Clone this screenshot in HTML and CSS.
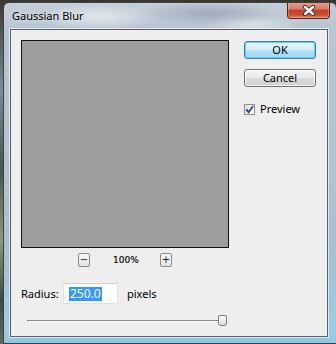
FILE: index.html
```html
<!DOCTYPE html>
<html>
<head>
<meta name="viewport" content="width=device-width, initial-scale=1.0">
<link rel="stylesheet" href="styles.css">
</head>
<body>

<div class="window">
  <div class="titlebar">
    <span class="title">Gaussian Blur</span>
    <span class="close">
      <svg width="14" height="11" viewBox="0 0 14 11">
        <path d="M3 2 L11 9 M11 2 L3 9" stroke="#3a2a2a" stroke-width="4.2" stroke-linecap="round"/>
        <path d="M3 2 L11 9 M11 2 L3 9" stroke="#ffffff" stroke-width="2.4" stroke-linecap="round"/>
      </svg>
    </span>
  </div>

  <div class="panel">
    <div class="top">
      <div class="left">
        <div class="preview"></div>
        <div class="zoom">
          <span class="zbtn">&minus;</span>
          <span class="pct">100%</span>
          <span class="zbtn">+</span>
        </div>
      </div>
      <div class="right">
        <div class="btn default">OK</div>
        <div class="btn">Cancel</div>
        <div class="check">
          <span class="box">
            <svg width="9" height="9" viewBox="0 0 9 9">
              <path d="M1.3 4.3 L3.6 7.2 L8 1.2" fill="none" stroke="#2f4a8f" stroke-width="1.9"/>
            </svg>
          </span>
          Preview
        </div>
      </div>
    </div>

    <div class="radius">
      <span class="label">Radius:</span>
      <div class="field"><span class="sel">250.0</span></div>
      <span class="unit">pixels</span>
    </div>

    <div class="slider">
      <div class="track"></div>
      <div class="thumb"></div>
    </div>
  </div>
</div>

</body>
</html>
```

FILE: styles.css
```css
* {box-sizing: border-box;}

body {
  margin: 0;
  width: 336px;
  height: 344px;
  overflow: hidden;
  background: linear-gradient(180deg, #3a362e 0, #4b4a44 20px, #7a8c98 90px, #44564c 170px, #8a9a78 240px, #3c4a40 300px, #606a5a 344px);
  font-family: "Noto Sans", sans-serif;
  font-size: 11px;
  color: #000;
}

.window {
  margin: 2px 0 0 3px;
  width: 334px;
  height: 342px;
  border: 1px solid #3b4148;
  border-radius: 6px 6px 0 0;
  overflow: hidden;
  background:
    radial-gradient(ellipse 60px 14px at 95px 14px, rgba(255,255,255,.55), transparent),
    radial-gradient(ellipse 70px 12px at 205px 10px, rgba(120,135,150,.45), transparent),
    radial-gradient(ellipse 50px 10px at 250px 22px, rgba(255,255,255,.45), transparent),
    linear-gradient(180deg, #c4ced8 0, #b8c5d1 26px, #b4c4cf 120px, #a9c0cc 250px, #9ccbe0 330px, #8cc6e4 342px);
}

.titlebar {
  height: 26px;
  display: flex;
  justify-content: space-between;
  align-items: flex-start;
  padding: 0 6px 0 8px;
}

.title {
  margin-top: 5px;
  font-size: 11px;
  line-height: 16px;
  text-shadow: 0 0 6px rgba(255,255,255,.9);
}

.close {
  margin-top: -1px;
  width: 43px;
  height: 17px;
  border: 1px solid #5a231a;
  border-top: none;
  border-radius: 0 0 4px 4px;
  background: linear-gradient(180deg, #e7a08f 0, #d77863 45%, #c2402a 52%, #c84a30 80%, #e58a68 100%);
  box-shadow: inset 0 0 0 1px rgba(255,200,190,.35);
  display: flex;
  align-items: center;
  justify-content: center;
}

.panel {
  margin-left: 6px;
  width: 318px;
  height: 308px;
  border: 1px solid #56636f;
  box-shadow: 0 0 0 1px rgba(255,255,255,.6);
  background: #eeeeee;
  padding: 10px 10px 0 10px;
}

.top {
  display: flex;
  gap: 15px;
}

.preview {
  width: 208px;
  height: 208px;
  border: 1px solid #111;
  background: #9d9d9d;
}

.zoom {
  margin-top: 4px;
  height: 15px;
  display: flex;
  justify-content: center;
  align-items: center;
  gap: 23px;
}

.zbtn {
  width: 12px;
  height: 14px;
  border: 1px solid #8a8a8a;
  border-radius: 2px;
  background: linear-gradient(180deg, #fafafa, #e2e2e2);
  font-family: "DejaVu Sans", sans-serif;
  font-size: 10px;
  line-height: 12px;
  text-align: center;
  color: #222;
}

.pct {
  font-family: "DejaVu Sans", sans-serif;
  font-size: 9px;
  color: #111;
  width: 24px;
  text-align: center;
  -webkit-text-stroke: 0.2px #111;
}

.right {
  padding-top: 1px;
  display: flex;
  flex-direction: column;
  gap: 10px;
}

.btn {
  width: 72px;
  height: 18px;
  border: 1px solid #707070;
  border-radius: 3px;
  background: linear-gradient(180deg, #f2f2f2 0, #ebebeb 50%, #dddddd 50%, #cfcfcf 100%);
  box-shadow: inset 0 0 0 1px rgba(255,255,255,.8);
  text-align: center;
  font-size: 11px;
  line-height: 16px;
}

.btn.default {
  border-color: #3c7fb1;
  background: linear-gradient(180deg, #e5f5fc 0, #d3eefb 50%, #b5e2f8 50%, #a2d6f2 100%);
  box-shadow: inset 0 0 0 1px #5fd2f3;
}

.check {
  margin-top: 6px;
  display: flex;
  align-items: center;
  gap: 5px;
  font-size: 11px;
  line-height: 12px;
}

.box {
  width: 11px;
  height: 11px;
  border: 1px solid #8f8f8f;
  background: linear-gradient(135deg, #e0e0e0, #fbfbfb);
  display: flex;
  align-items: center;
  justify-content: center;
}

.radius {
  margin-top: 16px;
  height: 21px;
  display: flex;
  align-items: center;
}

.label {
  width: 42px;
}

.field {
  width: 55px;
  height: 21px;
  border: 1px solid #e2e2e2;
  border-top-color: #cfcfcf;
  background: #fff;
  display: flex;
  align-items: center;
  padding-left: 5px;
}

.sel {
  background: #3399ff;
  color: #fff;
  font-size: 12px;
  line-height: 14px;
  padding: 0 1px;
}

.unit {
  margin-left: 9px;
}

.slider {
  margin: 11px 0 0 6px;
  width: 200px;
  height: 11px;
  display: flex;
  align-items: center;
}

.track {
  flex: 1;
  height: 2px;
  border-top: 1px solid #8c8c8c;
  border-bottom: 1px solid #ffffff;
  border-left: 1px solid #8c8c8c;
}

.thumb {
  margin-left: -4px;
  width: 9px;
  height: 11px;
  border: 1px solid #7a7a7a;
  border-radius: 2px 2px 3px 3px;
  background: linear-gradient(180deg, #fdfdfd, #dcdcdc);
}
```
